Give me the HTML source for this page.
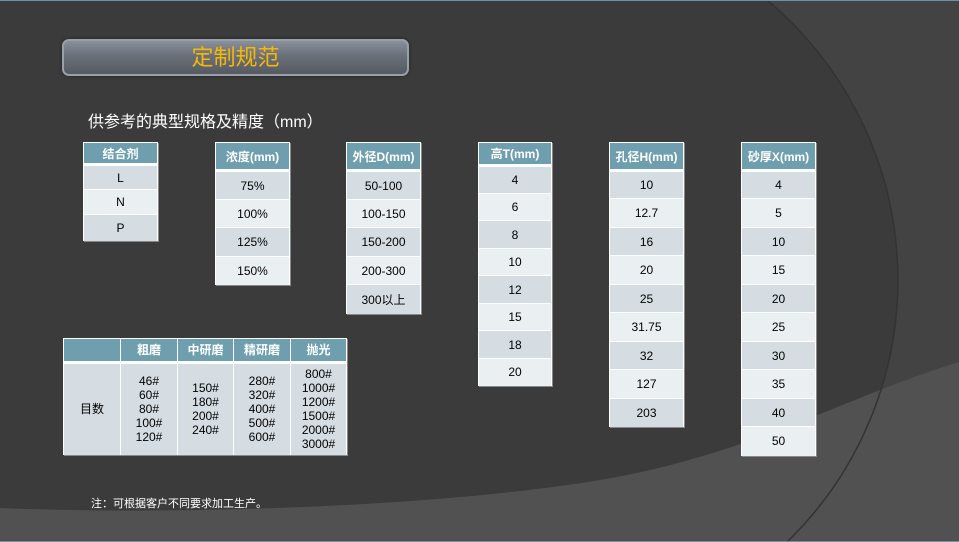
<!DOCTYPE html>
<html><head><meta charset="utf-8"><style>
*{margin:0;padding:0;box-sizing:border-box}
body{width:959px;height:542px;overflow:hidden;background:#3b3b3b;position:relative;font-family:"Liberation Sans","Noto Sans CJK SC",sans-serif}
svg.bg{position:absolute;left:0;top:0}
.title{position:absolute;left:62px;top:39px;width:347px;height:37px;border-radius:7px;background:linear-gradient(#8a9099,#6a7079 45%,#555a62);border:2px solid #9aa0a8;box-shadow:0 0 3px #222;color:#f9b800;font-size:22px;text-align:center;line-height:33px;font-family:"Liberation Sans","Noto Sans CJK SC",sans-serif}
.sub{position:absolute;left:88px;top:108px;color:#fff;font-size:16px}
.note{position:absolute;left:91px;top:495px;color:#fff;font-size:11px}
.t{position:absolute;border-collapse:collapse;font-size:12px;color:#000}
.t td{text-align:center;padding:0;border-left:1px solid #fff;border-right:1px solid #fff}
.t tr:nth-child(even) td{background:#d5dde2}
.t tr:nth-child(odd) td{background:#eaeff2}
.t tr td{border-top:1px solid #fff}
.t tr td.h{background:#6f9fae !important;color:#fff;font-weight:bold;border-bottom:3px solid #fff}
.t{box-shadow:1px 1px 0 #888}
.r td{height:28px}
.r tr:nth-child(odd) td{height:29px}
</style></head><body>
<svg class="bg" width="959" height="542">
<rect x="0" y="0" width="959" height="542" fill="#3b3b3b"/>
<path d="M767,0 A365,365 0 0 1 787,542 L959,542 L959,0 Z" fill="#434343"/>
<path d="M0,508 C200,516 450,505 600,480 S850,395 959,362 L959,542 L0,542 Z" fill="#515151"/>
<path d="M767,0 A365,365 0 0 1 787,542" fill="none" stroke="#333" stroke-width="1.5"/>
<rect x="0" y="0" width="959" height="1" fill="#6d8fb0"/>
<rect x="0" y="541" width="959" height="1" fill="#6d8fb0"/>
</svg>
<div class="title">定制规范</div>
<div class="sub">供参考的典型规格及精度（mm）</div>

<table class="t" style="left:83px;top:142px;width:75px">
<tr><td class="h" style="height:22px">结合剂</td></tr>
<tr><td style="height:25px">L</td></tr><tr><td style="height:25px">N</td></tr><tr><td style="height:26px">P</td></tr></table>

<table class="t" style="left:215px;top:142px;width:75px">
<tr><td class="h" style="height:28px">浓度(mm)</td></tr>
<tr><td style="height:29px">75%</td></tr><tr><td style="height:28px">100%</td></tr><tr><td style="height:29px">125%</td></tr><tr><td style="height:28px">150%</td></tr></table>

<table class="t" style="left:346px;top:142px;width:75px">
<tr><td class="h" style="height:28px">外径D(mm)</td></tr>
<tr><td style="height:29px">50-100</td></tr><tr><td style="height:28px">100-150</td></tr><tr><td style="height:29px">150-200</td></tr><tr><td style="height:28px">200-300</td></tr><tr><td style="height:29px">300以上</td></tr></table>

<table class="t" style="left:478px;top:142px;width:74px">
<tr><td class="h" style="height:23px">高T(mm)</td></tr>
<tr><td style="height:28px">4</td></tr><tr><td style="height:27px">6</td></tr><tr><td style="height:28px">8</td></tr><tr><td style="height:27px">10</td></tr><tr><td style="height:28px">12</td></tr><tr><td style="height:27px">15</td></tr><tr><td style="height:28px">18</td></tr><tr><td style="height:27px">20</td></tr></table>

<table class="t r" style="left:609px;top:142px;width:75px">
<tr><td class="h" style="height:28px">孔径H(mm)</td></tr>
<tr><td>10</td></tr><tr><td>12.7</td></tr><tr><td>16</td></tr><tr><td>20</td></tr><tr><td>25</td></tr><tr><td>31.75</td></tr><tr><td>32</td></tr><tr><td>127</td></tr><tr><td>203</td></tr></table>

<table class="t r" style="left:741px;top:142px;width:75px">
<tr><td class="h" style="height:28px">砂厚X(mm)</td></tr>
<tr><td>4</td></tr><tr><td>5</td></tr><tr><td>10</td></tr><tr><td>15</td></tr><tr><td>20</td></tr><tr><td>25</td></tr><tr><td>30</td></tr><tr><td>35</td></tr><tr><td>40</td></tr><tr><td>50</td></tr></table>

<table class="t" style="left:63px;top:338px;width:284px;line-height:14px">
<tr><td class="h" style="height:24px;width:57px"></td><td class="h" style="width:57px">粗磨</td><td class="h" style="width:56px">中研磨</td><td class="h" style="width:57px">精研磨</td><td class="h">抛光</td></tr>
<tr><td style="height:92px;background:#d5dde2">目数</td><td style="background:#d5dde2">46#<br>60#<br>80#<br>100#<br>120#</td><td style="background:#d5dde2">150#<br>180#<br>200#<br>240#</td><td style="background:#d5dde2">280#<br>320#<br>400#<br>500#<br>600#</td><td style="background:#d5dde2">800#<br>1000#<br>1200#<br>1500#<br>2000#<br>3000#</td></tr></table>

<div class="note">注：可根据客户不同要求加工生产。</div>
</body></html>
